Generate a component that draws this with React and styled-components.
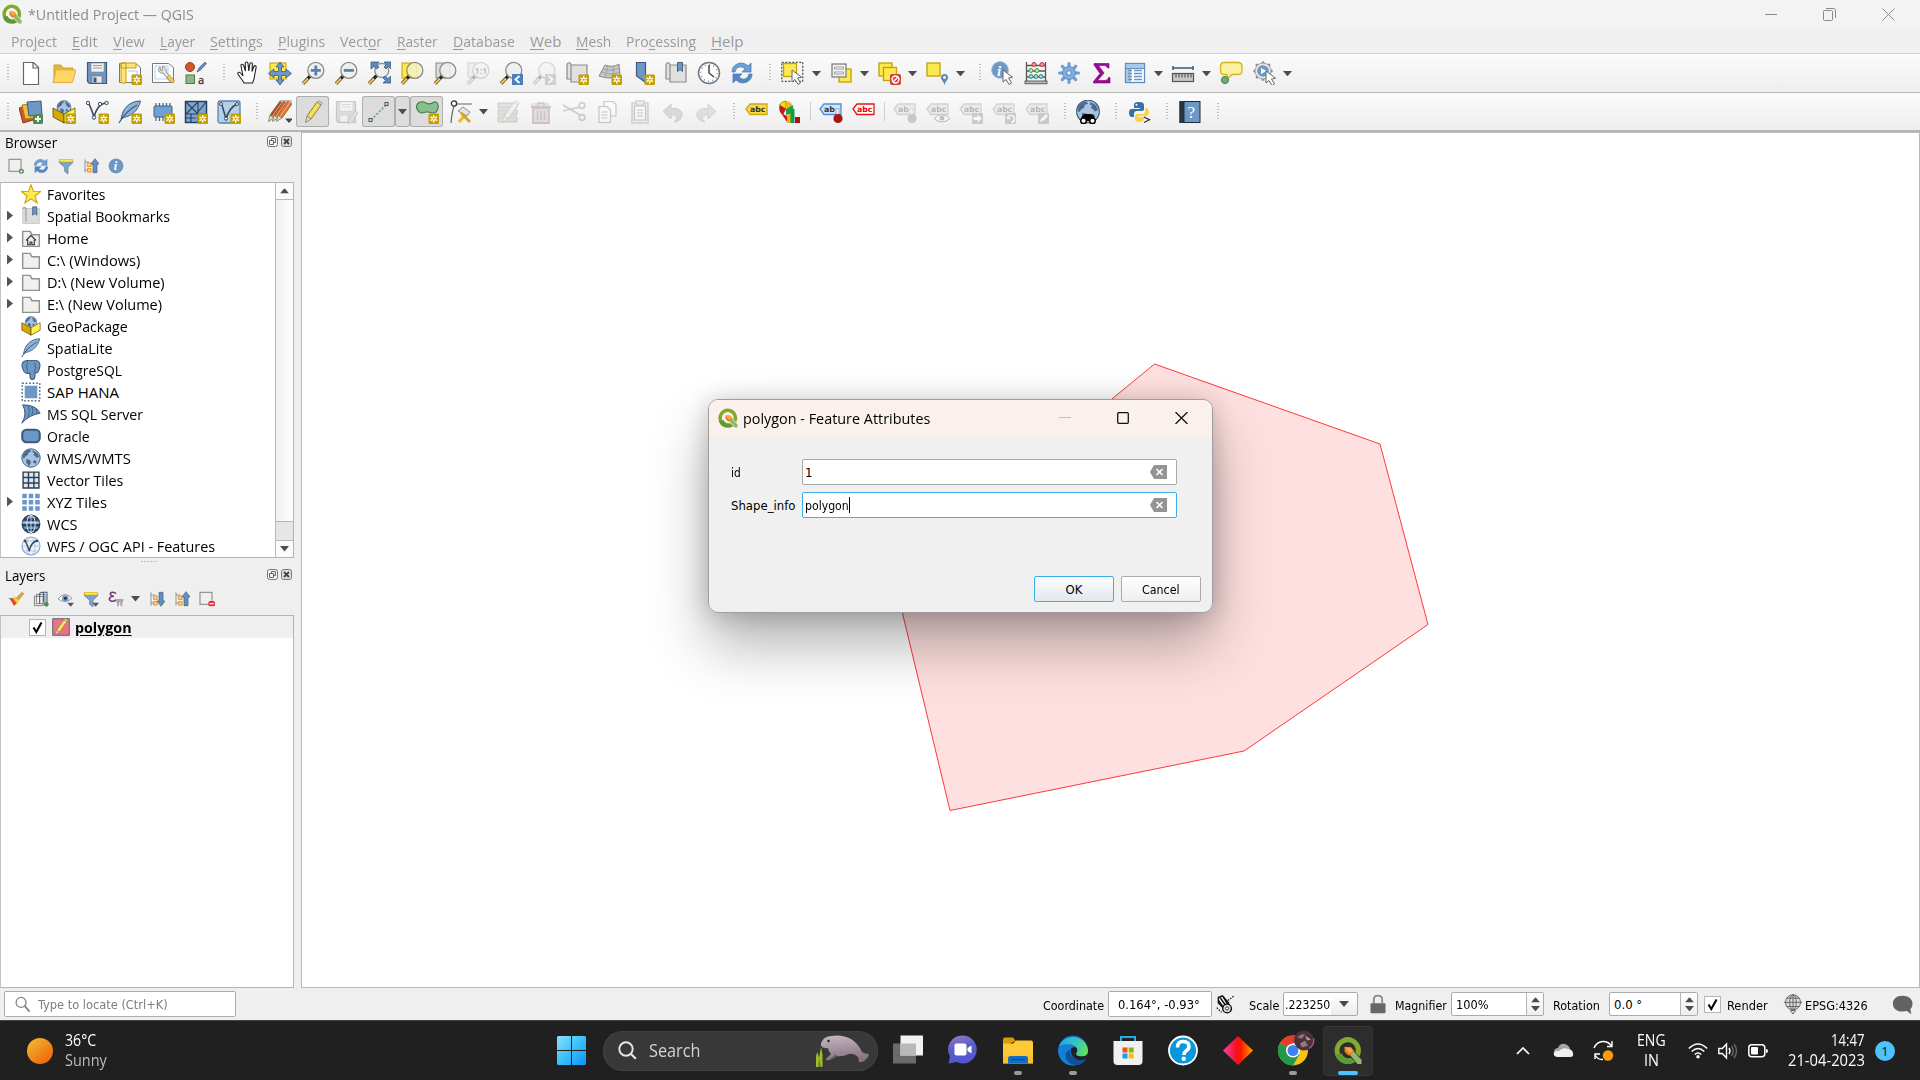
import React, { useLayoutEffect, useRef, useState } from "react";
import styled, { createGlobalStyle, css } from "styled-components";

const UI = `"Open Sans", "Noto Sans", sans-serif`;
const DLG = `"DejaVu Sans Condensed", "DejaVu Sans", sans-serif`;

const Global = createGlobalStyle`
  html, body { margin: 0; padding: 0; overflow: hidden; background: #efefef; }
  * { box-sizing: border-box; }
  svg { display: block; flex: none; }
`;

/* ---------- text fitted to a column width ---------- */
const FitBox = styled.span`
  display: block;
  flex: none;
  width: ${(p) => p.$w}px;
  margin-left: ${(p) => p.$ml || 0}px;
  white-space: nowrap;
  overflow: visible;
`;
const FitInner = styled.span`
  display: inline-block;
  transform-origin: 0 50%;
`;
function Fit({ w, ml, children }) {
  const ref = useRef(null);
  const [scale, setScale] = useState(1);
  useLayoutEffect(() => {
    const natural = ref.current.offsetWidth;
    if (natural) setScale(w / natural);
  }, [w]);
  return (
    <FitBox $w={w} $ml={ml}>
      <FitInner ref={ref} style={{ transform: `scaleX(${scale})` }}>{children}</FitInner>
    </FitBox>
  );
}

/* ---------- icon fragments ---------- */
const Y = "#fce94f";
const YD = "#c4a000";
const B = "#6d97c4";
const BD = "#3c5a7c";

const Star = () => (
  <g>
    <rect x="13.5" y="13.5" width="10.5" height="10.5" rx="1.2" fill="#c4a000" />
    <path d="M18.7 15v7.5M15.5 16.9l6.5 3.7M22 16.9l-6.5 3.7" stroke="#fff" strokeWidth="1.5" />
    <circle cx="18.7" cy="18.7" r="1" fill="#c4a000" />
  </g>
);
const Mag = ({ fill = "#eeeeec", r = 8 }) => (
  <g>
    <path d="M9.6 14.6 2 22.6" stroke="#222" strokeWidth="3.4" />
    <path d="M7 17.4 1.8 22.8" stroke="#f5c842" strokeWidth="2.2" />
    <circle cx="14.8" cy="9.4" r={r} fill={fill} fillOpacity=".88" stroke="#8a8c88" strokeWidth="1.3" />
  </g>
);
const Globe = ({ cx = 12, cy = 12, r = 9 }) => (
  <g transform={`translate(${cx - r} ${cy - r}) scale(${r / 10})`}>
    <circle cx="10" cy="10" r="9.6" fill="#a9c4e2" stroke={BD} strokeWidth="1" />
    <path d="M2 6Q5 1 9 1.500l1 2-3 1 0 2-3 2-1 2-2-1zM5 11l4 1 1 3-2 3.600L5 15zM12 2l5 3 1.500 4-3 1-1-2-2-1 1-2-2-1zM13 12l3 1-1 3-3-1z" fill={BD} fillOpacity=".85" />
  </g>
);
const Tag = ({ fill = Y, stroke = YD, color = "#333", t = "abc" }) => (
  <g>
    <path d="M1 9 5 4h17v10.500H5z" fill={fill} stroke={stroke} strokeWidth="1.3" />
    <text x="5" y="12" fontFamily="DejaVu Sans" fontWeight="bold" fontSize="7.800" letterSpacing="-.1" fill={color}>{t}</text>
  </g>
);
const Cursor = ({ x = 12, y = 9 }) => (
  <path transform={`translate(${x} ${y})`} d="M0 0v12l3-2.500 3 5 2.500-1.500-3-5 4-.8z" fill="#fff" stroke="#666" strokeWidth="1" />
);
const Refresh = () => (
  <g>
    <path d="M2 11C2 3 12-1 18 5l3-3v9h-9l3-3C11 4 6 6 5 11z" fill="#6d9fd8" stroke="#4c7fb5" strokeWidth=".8" />
    <path d="M22 13c0 8-10 12-16 6l-3 3v-9h9l-3 3c4 4 9 2 10-3z" fill="#5686c2" stroke="#4c7fb5" strokeWidth=".8" />
  </g>
);
const Pencil = ({ c = "#f1d94b", x = 0 }) => (
  <g transform={`translate(${x} 0)`}>
    <path d="M16 2 20 5 10 19 6 16z" fill={c} stroke="#8d7b1c" strokeWidth=".9" />
    <path d="M17.800 3.500 8 17.500" stroke="#fff" strokeOpacity=".5" strokeWidth="1" />
    <path d="M6 16 4.500 22.500 10 19z" fill="#ead8b8" stroke="#7a7a6a" strokeWidth=".8" />
    <path d="M16 2 18 0.600 21.600 3.200 20 5z" fill="#ccc" stroke="#888" strokeWidth=".6" />
  </g>
);
const Box = () => (
  <g>
    <Globe cx={12} cy={7.500} r={7.200} />
    <path d="M1 8 12 14v9L1 17z" fill="#d4aa00" stroke="#5c4a00" strokeWidth=".8" />
    <path d="M23 8 12 14v9l11-6z" fill="#fff155" stroke="#5c4a00" strokeWidth=".8" />
  </g>
);
const Feather = () => (
  <g>
    <path d="M22.500 1C13 1 6 7 4 15l-1 4 4-2C13 16 20 11 22.500 1z" fill="#8db2da" stroke={BD} strokeWidth="1" />
    <path d="M19 5C12 9 6 14 1 23" stroke={BD} fill="none" strokeWidth="1.200" />
  </g>
);
const Map_ = () => (
  <path d="M2 4c0-3 4-3 4 0h16v17H6v-3H2zM6 4v14" fill="#e0e0de" stroke="#8b8d89" strokeWidth="1.200" />
);
const QLogo = () => (
  <g>
    <path d="M12 0.500a11.500 11.500 0 1 0 6 21.300l-3.600-3.500a7 7 0 1 1 4-4.500l3.400 3.400A11.500 11.500 0 0 0 12 .5z" fill="#81a92c" />
    <path d="M12 23.500a11.500 11.500 0 0 1-11-8l5.600-1a7 7 0 0 0 7.800 3.800l3.600 3.500a11 11 0 0 1-6 1.700z" fill="#5f9a33" />
    <path d="m12.500 14.500 3-3.200 8 8.500v3.700h-3.400z" fill="#94b86a" />
    <path d="M9 9h5.500l3 3.500-5 4L9 13z" fill="#ee7913" />
    <path d="m9 9 6 1 1 2.500-3 2z" fill="#f7a64b" />
  </g>
);
const Tree = ({ down }) => (
  <g>
    <path d="M3 2v20M3 6h6M3 18h6" stroke="#888" strokeWidth="1.300" fill="none" />
    <rect x="7" y="7.500" width="5" height="5" fill="#fcd9a0" stroke="#f08c1c" strokeWidth="1.500" />
    <rect x="7" y="16" width="5" height="5" fill="#fcd9a0" stroke="#f08c1c" strokeWidth="1.500" />
    <path d={down ? "M18 23l-6-8h3V2h6v13h3z" : "M18 1l-6 8h3v13h6V9h3z"} fill="#6390c0" stroke={BD} strokeWidth="1" />
  </g>
);
const Funnel = () => (
  <g>
    <path d="M2 4h20v3L15 14v10l-5-4v-6L2 7z" fill="#7fa3cb" stroke="#55779c" strokeWidth="1" />
    <rect x="2" y="2" width="20" height="4" fill={Y} stroke={YD} strokeWidth=".7" />
  </g>
);
const FolderShape = () => (
  <path d="M2 4h9l2 4h9v14H2z" fill="#f0f0ef" stroke="#8f918d" strokeWidth="1.700" />
);
const DownTick = () => <path d="M14 17.500h10l-5 6z" fill="#555" />;

const ICONS = {
  logo: <QLogo />,
  newdoc: <path d="M4.500 1.500h10l5 5v17h-15zM14 1.500V7h5.500" fill="#fff" stroke="#666" strokeWidth="1.200" />,
  open: (<g><path d="M2 21V4h7l2 3h10v4" fill="#e3b53c" stroke="#d1a12a" /><path d="M1 21.500 4 9h20l-3.500 12.500z" fill="#fdd663" stroke="#e0b040" /></g>),
  save: (<g><path d="M2.500 1.500h19v21h-17l-2-2z" fill={B} stroke={BD} strokeWidth="1.200" /><rect x="6" y="2" width="13" height="9" fill="#f2f2f0" stroke="#888" strokeWidth=".6" /><path d="M8 4.500h9M8 7h9" stroke="#999" /><rect x="7" y="15" width="10" height="7" fill="#e8e8e8" stroke="#667" strokeWidth=".6" /><rect x="8.500" y="16.500" width="3" height="5" fill={BD} /></g>),
  savegrey: (<g><path d="M2.500 1.500h19v21h-17l-2-2z" fill="#aaa" stroke="#666" strokeWidth="1.200" /><rect x="6" y="2" width="13" height="9" fill="#f2f2f0" stroke="#888" strokeWidth=".6" /><path d="M8 4.500h9M8 7h9" stroke="#999" /><rect x="6" y="15" width="8" height="7" fill="#eee" stroke="#667" strokeWidth=".6" /><path d="M21 11l3 2-6 9-4 2 1-4z" fill="#cba" stroke="#765" strokeWidth=".8" /></g>),
  layout: (<g><path d="M1.500 2.500h16l5 4v15h-21z" fill="#fff" stroke="#777" /><path d="M3 2h5v20H3zM3 2h15v5H3z" fill="#fbe27a" stroke={YD} /><path d="M10 10h9v9" fill="none" stroke="#aac8f0" /><Star /></g>),
  manager: (<g><path d="M1.500 2.500h16l5 4v15h-21z" fill="#fff" stroke="#777" /><path d="M4 5h13v13H4z" fill="none" stroke="#b5cdf0" /><path d="M9 6c-3 2-1 7 3 6l8 10 3-2-8-9c1-4-2-6-4-5l1 3-2 1z" fill="#e6e6e6" stroke="#777" strokeWidth=".8" /><path d="m16 16 5 6 2.500-2-5-6z" fill="#f2cf51" stroke="#a8860d" strokeWidth=".6" /></g>),
  style: (<g><circle cx="6" cy="6" r="4.500" fill="#d2572b" stroke="#9c3a16" /><path d="m13 11 2-4 6-6 1.500 1.500-6 6.500z" fill="#5f8fc4" stroke={BD} strokeWidth=".7" /><rect x="2" y="14" width="8.500" height="8.500" fill="#8cb68c" stroke="#4c7a4c" /><text x="14" y="22.500" fontFamily="Open Sans" fontSize="11" fill="#333" stroke="#333" strokeWidth=".3">a</text></g>),
  hand: <path transform="translate(1 0)" d="M8 22c-1-3-4-5-6-9-.6-2 1.500-2.500 3-.5L7 15 5 5c-.3-2 2-2.400 2.600-.5L9.500 10 9.200 2.500c0-2 2.600-2 2.800 0L12.800 10l1-7c.3-1.800 2.700-1.500 2.600.4L16 10.500l1.900-5c.7-1.500 2.600-.8 2.200 1L18.500 15c0 3-1 5-2 7z" fill="#fff" stroke="#222" strokeWidth="1.100" />,
  pan: (<g><rect x="2" y="2" width="16" height="16" fill={Y} stroke={YD} /><path d="m12 1 4 5h-2.500v4.500H18V8l5.500 4.500L18 17v-2.500h-4.500V19H16l-4 5-4-5h2.500v-4.500H6V17L.5 12.500 6 8v2.500h4.500V6H8z" fill={B} stroke={BD} strokeWidth=".8" /></g>),
  zoomin: (<g><Mag /><path d="M14.800 4.500v10M9.800 9.400h10" stroke="#5180b5" strokeWidth="2.800" /></g>),
  zoomout: (<g><Mag /><path d="M9.800 9.400h10" stroke="#5180b5" strokeWidth="2.800" /></g>),
  zoomfull: (<g><Mag r={7} /><path d="M4 1h8L9.500 3.500 12 6 9.500 8 7 5.500 4 8zM24 1h-7l2.500 2.500L17 6l2 2 2.500-2.500L24 8zM24 22h-8l2.500-2.500L16 17l2-2 3 2.500 3-2.500z" fill="#5a8ac0" stroke={BD} strokeWidth=".8" /></g>),
  zoomsel: (<g><rect x="2" y="2" width="15" height="15" fill={Y} stroke={YD} /><Mag fill="#f5f0c0" /></g>),
  zoomlayer: (<g><rect x="3" y="2" width="14" height="15" fill="#ddd" stroke="#888" /><Mag /></g>),
  zoom11: (<g><rect x="2" y="2" width="14" height="14" fill="#ddd" stroke="#888" /><Mag /><text x="8.500" y="13" fontFamily="Open Sans" fontWeight="bold" fontSize="9" fill="#555">1:1</text></g>),
  zoomlast: (<g><Mag /><rect x="13" y="13" width="11" height="11" fill="#4e80b8" /><path d="m20.500 15-4 3.500 4 3.500" fill="none" stroke="#fff" strokeWidth="1.800" /></g>),
  zoomnext: (<g><Mag /><rect x="13" y="13" width="11" height="11" fill="#888" /><path d="m16.500 15 4 3.500-4 3.500" fill="none" stroke="#fff" strokeWidth="1.800" /></g>),
  newmap: (<g><Map_ /><Star /></g>),
  mesh: (<g><path d="M1 15Q5 8 7 4q8 3 14-1l1 12q-10 4-21 0z" fill="#c6c8c4" stroke="#888" /><path d="M3.500 11q10 4 18.500 0M5 8q8 3 17-1M10 5 7 16M15 5l1 12" fill="none" stroke="#999" strokeWidth=".8" /><Star /></g>),
  bookmark: (<g><path d="M5.500 1.500h9v20L10 18l-4.500-3z" fill={B} stroke={BD} strokeWidth="1.200" /><Star /></g>),
  bookmarks: (<g><Map_ /><path d="M13.500 1.500h5v9L16 8.500l-2.500 2z" fill={B} stroke={BD} strokeWidth=".9" /></g>),
  clock: (<g><circle cx="12" cy="12" r="10.500" fill="#fff" stroke="#777" strokeWidth="1.500" /><circle cx="12" cy="12" r="8.400" fill="none" stroke={B} strokeWidth="1.600" strokeDasharray="1 3.400" /><path d="M12 4v8l5 4" fill="none" stroke="#444" strokeWidth="1.500" /></g>),
  refresh: <Refresh />,
  select: (<g><rect x=".8" y="1.300" width="21" height="19" fill="none" stroke="#222" strokeDasharray="2 1.500" /><rect x="2.500" y="2.500" width="13" height="13" fill={Y} stroke={YD} strokeWidth="1.300" /><Cursor x={11} y={9} /></g>),
  selform: (<g><rect x="10" y="8" width="12" height="13" fill={Y} stroke={YD} strokeWidth="1.300" /><rect x="3" y="3" width="14" height="13" fill="#f2f2f2" stroke="#777" strokeWidth="1.200" /><path d="M5.500 6h9v2h-9zM5.500 11h9v2h-9z" fill="#fff" stroke="#888" strokeWidth=".8" /></g>),
  deselect: (<g><rect x="2" y="2" width="13" height="13" fill={Y} stroke={YD} strokeWidth="1.300" /><rect x="6.500" y="6.500" width="13" height="13" fill={Y} stroke={YD} strokeWidth="1.300" /><rect x="13" y="13" width="11" height="11" rx="2" fill="#dc3b35" /><circle cx="18.500" cy="18.500" r="3.400" fill="none" stroke="#fff" strokeWidth="1.500" /><path d="m16 21 5-5" stroke="#fff" strokeWidth="1.500" /></g>),
  selloc: (<g><rect x="2" y="2" width="13" height="13" fill={Y} stroke={YD} strokeWidth="1.300" /><path d="M19.500 24c-1-4-3.500-5-3.500-7.500a3.500 3.500 0 0 1 7 0c0 2.500-2.500 3.500-3.500 7.500z" fill="#5e86a8" /><circle cx="19.500" cy="16.500" r="1.400" fill="#fff" /></g>),
  info: (<g><circle cx="9" cy="9" r="8.300" fill={B} stroke="#9bb6d6" /><text x="6" y="14.500" fontFamily="Liberation Serif" fontStyle="italic" fontWeight="bold" fontSize="15" fill="#fff">i</text><Cursor x={12} y={9} /></g>),
  infosmall: (<g><circle cx="12" cy="12" r="10.500" fill={B} stroke="#587fb0" /><text x="8.500" y="18.500" fontFamily="Liberation Serif" fontStyle="italic" fontWeight="bold" fontSize="19" fill="#fff">i</text></g>),
  abacus: (<g><path d="M2.500 1v20M21.500 1v20M2 4.500h20M2 10h20M2 16h20" stroke="#555" strokeWidth="1.300" fill="none" /><rect x="1" y="20" width="22" height="2.800" fill="#bbb" stroke="#444" strokeWidth=".8" /><g fill="#f49a9a" stroke="#c22"><circle cx="10" cy="3.500" r="2" /><circle cx="18" cy="3.500" r="2" /></g><g fill="#b6e6b0" stroke="#3a9d3a"><circle cx="7" cy="9.500" r="2" /><circle cx="13" cy="9.500" r="2" /></g><g fill="#a8cbe8" stroke="#387"><circle cx="7" cy="15.500" r="2" /><circle cx="12" cy="15.500" r="2" /><circle cx="17" cy="15.500" r="2" /></g></g>),
  gear: (<g><g stroke="#6f9fd4" strokeWidth="3.200" strokeLinecap="round"><path d="M12 2.500v19M2.500 12h19M5.300 5.300l13.400 13.400M18.700 5.300 5.300 18.700" /></g><circle cx="12" cy="12" r="6.500" fill="#82aede" stroke="#4f82bd" strokeWidth=".8" /><circle cx="12" cy="12" r="2.300" fill="#f5f5f5" stroke="#4f82bd" /></g>),
  sigma: <path d="M4 2.500h15V7h-1.500Q17 4.500 14 4.500H8.500L14 12l-6.500 7.500H15q3 0 3.500-3H20V22H3.500v-1.500L10 12.500 4 4z" fill="#9b0a9b" stroke="#750075" strokeWidth=".6" />,
  table: (<g><rect x="2.500" y="2.500" width="19" height="19" fill="#fff" stroke="#5c8fbf" strokeWidth="1.300" /><path d="M3 3h18v4H3zM3 3h5v18H3z" fill="#a9c9e6" /><path d="M5 9.500h4M11 9.500h8M5 12.500h4M11 12.500h8M5 15.500h4M11 15.500h8M5 18.500h4M11 18.500h8" stroke="#6793bd" strokeWidth="1.300" /><path d="M2.500 7.500h19" stroke="#5c8fbf" /></g>),
  measure: (<g><path d="M2 7h20M2 5v4M22 5v4" stroke={BD} strokeWidth="1.500" fill="none" /><rect x="1.500" y="12.500" width="21" height="8" fill="#c8c8c6" stroke="#555" strokeWidth="1.200" /><path d="M5 13v3.500M8 13v3.500M11 13v3.500M14 13v3.500M17 13v3.500M20 13v3.500" stroke="#444" /></g>),
  maptip: (<g><path d="M5 1.500h14q4 0 4 4v4q0 4-4 4h-6L8 18v-4.500H5q-3.500 0-3.500-4v-4q0-4 3.500-4z" fill="#fdf1a0" stroke="#d0b51c" strokeWidth="1.300" /><circle cx="6" cy="19" r="3.600" fill="#72a878" stroke="#4a7d50" /></g>),
  action: (<g><g stroke="#888" strokeWidth="3.200" strokeLinecap="round"><path d="M11 1.800v16.400M2.800 10h16.400M5.200 4.200l11.600 11.600M16.800 4.200 5.200 15.800" /></g><circle cx="11" cy="10" r="8" fill="#e6e6e4" stroke="#999" strokeWidth=".8" /><circle cx="11" cy="10" r="5.800" fill={B} /><path d="m9 7 5.500 3L9 13z" fill="#fff" /><Cursor x={14} y={10} /></g>),
  addlayer: (<g><path d="m0 8 8-2 6 14-10 3z" fill="#d9512c" stroke="#93320f" /><path d="m3 5 10-1 3 14-10 1z" fill="#eebf3c" stroke="#a27a10" /><path d="m8 2 14-1 1 14-13 1z" fill={B} stroke={BD} /><rect x="14" y="14" width="10" height="10" rx="1.500" fill="#4f8a56" /><path d="M19 16v6M16 19h6" stroke="#fff" strokeWidth="1.800" /></g>),
  geopkg: (<g><Box /><Star /></g>),
  geopkgs: <Box />,
  shape: (<g><path d="M4 4Q7 10 9 17Q12 5 20 3" fill="none" stroke="#33475c" strokeWidth="1.600" /><g fill="#fff" stroke="#33475c" strokeWidth="1"><circle cx="3" cy="3" r="1.700" /><circle cx="9" cy="17.500" r="1.700" /><circle cx="15" cy="4" r="1.700" /><circle cx="21.500" cy="3" r="1.700" /></g><Star /></g>),
  spatial: (<g><Feather /><Star /></g>),
  feather: <Feather />,
  memory: (<g><path d="M5 3v18M8.500 3v18M12 3v18M15.500 3v18M19 3v18" stroke="#44607f" strokeWidth="1.200" /><rect x="3" y="6" width="18" height="11" rx="1" fill="#6fa0d6" stroke="#44607f" /><Star /></g>),
  meshlayer: (<g><rect x="1.500" y="1.500" width="21" height="21" fill="#7fa5cf" stroke="#24405e" strokeWidth="1.500" /><path d="m2 2 12 12M14 2 2 14M14 2v20M2 14h20M22 2 14 12M2 18h10M7 14v8" stroke="#24405e" fill="none" strokeWidth="1.100" /><Star /></g>),
  gpx: (<g><rect x="1" y="1" width="22" height="22" rx="2" fill="#b5cfe8" stroke="#5a83ad" strokeWidth="1.300" /><path d="M5 5 9 19Q12 8 20 4" fill="none" stroke="#33475c" strokeWidth="1.500" /><g fill="#fff" stroke="#33475c"><circle cx="4" cy="4" r="1.500" /><circle cx="9" cy="18.500" r="1.500" /><circle cx="20" cy="4" r="1.500" /></g><Star /></g>),
  edits: (<g><g transform="translate(1 -1)"><Pencil c="#b5423a" x={-5} /><Pencil c="#d85a30" x={-1} /><Pencil c="#e87131" x={3} /></g><path d="M17 18.500h8l-4 4.500z" fill="#444" /></g>),
  pencil: <Pencil />,
  digitize: (<g><path d="m4 20 15-15" stroke="#72b377" strokeWidth="1.800" strokeDasharray="2.200 1.600" /><rect x="2" y="18.500" width="3" height="3" fill="#ddd" stroke="#555" /><rect x="18" y="2.500" width="3" height="3" fill="#ddd" stroke="#555" /></g>),
  addpoly: (<g><path d="M2 9C0 3 6 0 11 3q4 2 8-1c4-1 6 6 2 10-4 3-6-1-10 0S4 14 2 9z" fill="#87c08b" stroke="#4b7f52" strokeWidth="1.200" /><Star /></g>),
  vertex: (<g transform="translate(1 0)"><path d="M2 23Q3 10 6 4h17" fill="none" stroke="#666" strokeWidth="1.200" /><circle cx="5" cy="3.500" r="2.600" fill="#fff" stroke="#333" strokeWidth="1.300" /><path d="m10 22 8-9" stroke="#edb92e" strokeWidth="3.200" /><path d="m9 11 5-4 7 5-3 4z" fill="#e3e3e3" stroke="#777" strokeWidth=".8" /><path d="m12 13 9 9" stroke="#d9a520" strokeWidth="2.800" /></g>),
  multi: (<g><path d="M2 3h19v5H2zM2 10h19v5H2zM2 17h19v5H2z" fill="#b9b493" stroke="#77735a" /><Pencil c="#ddd" x={2} /></g>),
  del: (<g><path d="M2 3h18v5H2z" fill="#bba" /><path d="M4 8h16v15H4zM2 7h20" fill="#d9a5a5" stroke="#a55" strokeWidth="1.800" /><path d="M8.500 11v9M12 11v9M15.500 11v9M9 6V3h6v3" stroke="#a55" strokeWidth="1.500" fill="none" /></g>),
  cut: (<g fill="none" stroke="#777" strokeWidth="1.700"><path d="M1 5 18 15M1 11l17-4" /><circle cx="20" cy="5.500" r="2.800" /><circle cx="20" cy="17.500" r="2.800" /></g>),
  copy: (<g fill="#fff" stroke="#666" strokeWidth="1.200"><path d="M9 1.500h9l3 3V16H9z" /><path d="M4 6.500h8l3.500 3.500v12.500H4zM6.500 12h6M6.500 15h6M6.500 18h6" /></g>),
  paste: (<g fill="#ddd" stroke="#666" strokeWidth="1.200"><path d="M4 3h16v20H4z" /><path d="M6.500 6h11v14h-11z" fill="#fff" /><path d="M8 1h8v4H8zM9 10h6M9 13h6M9 16h6" /></g>),
  undo: <path d="M10 4v4.500c8-1 12 3 11 7.500-1 3.500-4 5.500-8 6 3-2 5-7-3-7.500V19L2 11.500z" fill="#b79a96" stroke="#94706c" />,
  redo: <path d="M14 4v4.500c-8-1-12 3-11 7.500 1 3.500 4 5.500 8 6-3-2-5-7 3-7.500V19l8-7.500z" fill="#a8b5a8" stroke="#7c917c" />,
  tag: <Tag fill="#f6dd47" stroke="#cba90d" />,
  diagram: (<g><path d="M8 9V1A8 8 0 0 0 1.500 5z" fill="#f5e300" stroke="#333" strokeWidth=".5" /><path d="M8 9 1.500 5Q0 12 5 15z" fill="#c81818" /><path d="M8 9 14.500 5C17 10 13 15 8 15z" fill="#10a050" /><path d="M8 9V1q4.500.5 6.500 4z" fill="#f3b51c" /><path d="m3 13 6 3v6z" fill="#c81818" /><rect x="9" y="14" width="4" height="9" fill="#f0b70a" /><rect x="12.500" y="9" width="4" height="14" fill="#0a9c50" /><rect x="17" y="17" width="5" height="6" fill="#b50e0e" /></g>),
  tagpin: (<g><Tag fill="#cfe3fa" stroke="#4a90e2" t="ab" /><path d="M17 8.500h3v7h-3z" fill="#eee" stroke="#888" strokeWidth=".6" /><circle cx="19" cy="18.500" r="4.600" fill="#a81616" /></g>),
  tagred: <Tag fill="#fff" stroke="#ee1111" color="#e00" />,
  tagpin2: (<g><Tag fill="#d8d4c0" stroke="#8c8a80" t="ab" /><path d="M17 8.500h3v7h-3z" fill="#eee" stroke="#888" strokeWidth=".6" /><circle cx="19" cy="18.500" r="4.600" fill="#865" /></g>),
  tageye: (<g><Tag fill="#d8d4c0" stroke="#8c8a80" /><path d="M8 18.500q8-8 16 0-8 7-16 0z" fill="#fff" stroke="#444" /><circle cx="16" cy="18" r="2.500" fill="#555" /></g>),
  tagmove: (<g><Tag fill="#d8d4c0" stroke="#8c8a80" /><rect x="13" y="13" width="11" height="11" rx="1" fill="#777" /><path d="M14.500 17h4v-2.500l4.500 4-4.500 4V20h-4z" fill="#fff" /></g>),
  tagrot: (<g><Tag fill="#d8d4c0" stroke="#8c8a80" /><rect x="13" y="13" width="11" height="11" rx="1" fill="#777" /><path d="M19 22.500a3.500 3.500 0 1 0-3.500-4h3" fill="none" stroke="#fff" strokeWidth="1.700" /></g>),
  tagedit: (<g><Tag fill="#d8d4c0" stroke="#8c8a80" /><rect x="13" y="13" width="11" height="11" rx="1" fill="#77755f" /><path d="m15 22 1-3 5-5 2 2-5 5z" fill="#fff" /></g>),
  metasearch: (<g><Globe cx={12} cy={11.500} r={11.800} /><path d="M5 19q1-5 5-5h4q4 0 5 5l-5 2h-4z" fill="#000" /><circle cx="7.500" cy="20.800" r="2.800" fill="#fff" stroke="#000" strokeWidth="1.500" /><circle cx="16.500" cy="20.800" r="2.800" fill="#fff" stroke="#000" strokeWidth="1.500" /></g>),
  python: (<g><path d="M12 2c-4 0-5 1-5 3v3h6v1H4.500C2.500 9 2 11 2 13s1 4 3 4h2v-3c0-2 1-3 3-3h5c1.500 0 2-1 2-2V5c0-2-1.500-3-5-3z" fill="#3572a5" /><path d="M12 22c4 0 5-1 5-3v-2h-6v-1h8.500c1.500 0 2.500-2 2.500-4s-1-4-3-4h-1v3c0 2-1 3-3 3h-5c-1.500 0-2 1-2 2v3c0 2 1 3 4 3z" fill="#fdd23e" /><circle cx="9.500" cy="4.700" r="1" fill="#fff" /><path d="m17 17 5.500 2.800-5.500 2.700" fill="none" stroke="#333" strokeWidth="1.300" /></g>),
  help: (<g><rect x="2" y="1.500" width="20" height="21" fill={B} stroke="#1d2a38" /><rect x="1.500" y="1" width="5" height="22" fill="#26343f" /><text x="9.500" y="18" fontFamily="Liberation Serif" fontSize="17" fill="#fff">?</text></g>),
  newlayer: (<g><rect x="1.500" y="2" width="18" height="18" fill="none" stroke="#888" strokeWidth="1.600" /><circle cx="20" cy="20" r="3.800" fill="#4f8a56" /><path d="M20 18v4M18 20h4" stroke="#fff" strokeWidth="1.300" /></g>),
  removelayer: (<g><rect x="1.500" y="2" width="18" height="18" fill="none" stroke="#888" strokeWidth="1.600" /><rect x="14" y="15" width="10" height="8" rx="2.500" fill="#e0383e" /><path d="M16 19h6" stroke="#fff" strokeWidth="1.800" /></g>),
  filter: <Funnel />,
  filterdd: (<g><Funnel /><DownTick /></g>),
  collapse: <Tree />,
  expand: <Tree down />,
  star: <path d="m12 1 3 7.800 8.500.3-6.700 5.300 2.500 8.300-7.300-4.900-7.300 4.900 2.500-8.300L.5 9.100 9 8.800z" fill="#fdea4c" stroke="#c9a20c" strokeWidth="1.300" />,
  spbook: (<g><path d="M2 3h20v18H2z" fill="#dcdcda" stroke="#c4c6c2" strokeWidth="1" /><path d="M2 3q2-2 4 0v16" fill="none" stroke="#999" strokeWidth="1.300" /><path d="M14 1h5v10l-2.500-2-2.500 2z" fill={B} stroke={BD} strokeWidth=".9" /></g>),
  home: (<g><FolderShape /><path d="m6 15 6-6 6 6M8 14v6h3v-3h2v3h3v-6" fill="none" stroke="#444" strokeWidth="1.500" /></g>),
  folder: <FolderShape />,
  postgres: (<g><path d="M3 2q4-2 8-1 6-2 10 1 4 4-1 13l-3 .500q0 5-1 7-3 2-5-1l-.5-6Q4 18 2 10 0 5 3 2z" fill={B} stroke={BD} strokeWidth="1.300" /><path d="M8 2q-3 6 0 12M16 3q3 5 0 12" fill="none" stroke={BD} /></g>),
  hana: (<g><rect x="4.500" y="4.500" width="15" height="15" fill={B} /><rect x="1.500" y="1.500" width="21" height="21" fill="none" stroke={BD} strokeWidth="1.800" strokeDasharray="1.800 2.400" /></g>),
  mssql: (<g><path d="M2 1Q18 1 23 11 10 13 1 23 8 12 2 1z" fill={B} stroke={BD} strokeWidth="1.200" /><path d="M8 2q4 6 0 14M13 3q3 5 0 10M18 5q2 4 0 7" fill="none" stroke={BD} /></g>),
  oracle: <rect x="1.500" y="4.500" width="21" height="15" rx="5" fill={B} stroke={BD} strokeWidth="2.500" />,
  globe: <Globe r={11.5} />,
  vtiles: (<g><rect x="2.500" y="2.500" width="19" height="19" fill="#dce8f5" /><path d="M2.500 2.500h19v19h-19zM9 2v20M15.500 2v20M2 9h20M2 15.500h20" fill="none" stroke="#2f3e4e" strokeWidth="1.700" /></g>),
  xyz: (<path d="M1.500 2h5.500v5.500H1.500zM9.200 2h5.500v5.500H9.200zM17 2h5.500v5.500H17zM1.500 9.500h5.500v5.500H1.500zM9.200 9.500h5.500v5.500H9.200zM17 9.500h5.500v5.500H17zM1.500 17h5.500v5.500H1.500zM9.200 17h5.500v5.500H9.200zM17 17h5.500v5.500H17z" fill={B} />),
  wcs: (<g><circle cx="12" cy="12" r="10.500" fill={B} stroke="#27405c" strokeWidth="1.600" /><path d="M4 5h16v3.500H4zM1.500 12h21v3H1.500zM5 18h14v2.500H5z" fill="#27405c" /><ellipse cx="12" cy="12" rx="5" ry="10.500" fill="none" stroke="#dbe8f5" strokeWidth="1.200" /><path d="M12 1.500v21M1.500 10.500h21" stroke="#dbe8f5" /></g>),
  wfs: (<g><circle cx="12" cy="12" r="10.800" fill="#eef4fa" stroke="#7ea3cb" strokeWidth="1.300" /><ellipse cx="12" cy="12" rx="5" ry="10.500" fill="none" stroke="#a5c0df" /><path d="M1.500 12h21M3 6h18M3 18h18" stroke="#a5c0df" /><path d="M5 6q3 5 5 12Q12 8 18 6" fill="none" stroke="#33475c" strokeWidth="1.700" /><circle cx="19" cy="6" r="1.600" fill="#33475c" /><circle cx="5" cy="6" r="1.600" fill="#33475c" /></g>),
  brush: (<g><path d="m12 11 9-9 2.500 2-8 10z" fill="#e8a23a" stroke="#a86d12" strokeWidth=".7" /><path d="M2 10q5 2 8-2l7 7q-2 5-7 6z" fill="#f3cf3d" /><path d="M2 10q3 1.500 5 .5l6 8-4 4z" fill="#dd4b2e" /><path d="m1 10 3 .8 4 7z" fill="#4f7fc0" /></g>),
  group: (<g fill="none" stroke="#777" strokeWidth="1.300"><rect x="2" y="8" width="13" height="14" /><rect x="5" y="5" width="13" height="14" /><path d="M21 19V2h-7M10 19V5q0-3 3-3t3 3v12" stroke={BD} strokeWidth="1.600" /><circle cx="20" cy="20" r="3.500" fill="#4f8a56" stroke="none" /></g>),
  eye: (<g><path d="M0 12Q10-1 21 11 11 20 0 12z" fill="#f7f7f7" stroke="#7d8b99" strokeWidth="1.300" /><circle cx="11" cy="11" r="4.800" fill={B} /><circle cx="11" cy="11" r="2" fill="#223" /><DownTick /></g>),
  eps: (<g><path d="M12 4Q9 1 5 2.200 2 4 5 7q1 .8 4 .8-4 0-6 2-2.500 4 2 5.500 4 .8 7-2" fill="none" stroke="#6b3f70" strokeWidth="2.400" /><path d="M12 12h11v3l-1.500 3v5h-3v-5l-1-1-1 1v5h-3v-5L12 15z" fill="#aaa" /></g>),
  laypoly: (<g><rect x="1" y="1" width="22" height="22" fill="#e8718d" stroke="#444" strokeWidth="1" /><Pencil /></g>),
  gps: (<g><path d="m3 3 5-2 8 9-6 7-7-7z" fill="#fff" stroke="#111" strokeWidth="1.800" /><path d="m5 3 7 10M9 2l6 10M3 7l6 8" stroke="#111" strokeWidth="2" /><circle cx="14" cy="17" r="5.500" fill="#ddd" stroke="#111" strokeWidth="1.800" /><circle cx="14" cy="17" r="2" fill="#fff" stroke="#111" /><path d="m15 7 8-6M1 16l6 6" stroke="#111" strokeDasharray="2 1.500" strokeWidth="1.500" /></g>),
  lock: (<g><path d="M7 11V7q0-5 5-5t5 5v4" fill="none" stroke="#888" strokeWidth="2.200" /><rect x="3" y="11" width="18" height="12" rx="1" fill="#666" /></g>),
  crs: (<g fill="none" stroke="#666" strokeWidth="1.200"><circle cx="12" cy="10" r="9" fill="#ddd" /><ellipse cx="12" cy="10" rx="4" ry="9" /><path d="M1 10h22M4 5h16M4 15h16M12 1v19M9 20h6l-3 4z" /></g>),
  bubble: <path d="M12 2C5 2 1 6 1 11s4 9 11 9l5-.5L22 23l-1-6q2.500-2.500 2.500-6C23.500 6 19 2 12 2z" fill="#636363" />,
  mag: (<g fill="none" stroke="#858585"><circle cx="10" cy="9" r="7" strokeWidth="1.800" /><path d="m15 14 7 8" strokeWidth="2.600" /></g>),
};
const Icon = ({ n, s = 24 }) => (
  <svg width={s} height={s} viewBox="0 0 24 24">{ICONS[n]}</svg>
);
const Tri = ({ s = 9 }) => (
  <svg width={s} height={s * 0.6} viewBox="0 0 10 6"><path d="M0 0h10L5 6z" fill="#4d4d4d" /></svg>
);

/* ---------- window shell ---------- */
const Screen = styled.div`
  width: 1920px; height: 1080px; position: relative; overflow: hidden;
  display: grid; grid-template-rows: 28px 26px 39px 39px 856px 32px 60px;
  background: #efefef; color: #000; font: 15px/20px ${UI};
`;
const TitleBar = styled.header`
  display: flex; align-items: center; background: #f3f3f3; color: #8b8b8b; padding-left: 2px;
  > ${FitBox} { padding-bottom: 1px; }
`;
const WinButtons = styled.div`
  margin-left: auto; display: flex; gap: 46px; margin-right: 25px;
`;
const MenuBar = styled.nav`
  display: flex; align-items: center; gap: 15px; padding-left: 11px;
  color: #9a9a9a; border-bottom: 1px solid #d4d4d4; background: #f0f0f0;
  u { text-underline-offset: 2px; text-decoration-thickness: 1px; }
`;
const ToolBar = styled.div`
  display: flex; align-items: center; background: linear-gradient(#fbfbfb, #eeeeee);
  border-bottom: ${(p) => (p.$last ? 2 : 1)}px solid #b6b6b6;
`;
const dots = css`
  background:
    conic-gradient(from 90deg at 1px 1px, transparent 75%, #bdbdbd 0) 0 0 / 3px 3px;
`;
const Handle = styled.i`
  flex: none; width: ${(p) => (p.$first ? 14 : 18)}px; height: 18px;
  padding-left: ${(p) => (p.$first ? 6 : 10)}px;
  &::after { content: ""; display: block; width: 4px; height: 18px; ${dots} }
`;
const Slot = styled.span`
  flex: none; width: 33px; height: 31px; display: flex; align-items: center; padding-left: 5px;
  ${(p) => p.$off && css`filter: grayscale(.6); opacity: 0.32;`}
  ${(p) => p.$on && css`
    background: #dcdcdc; box-shadow: inset 0 0 0 1px #aeaeae; border-radius: 3px;
  `}
`;
const Drop = styled.span`
  flex: none; width: 15px; height: 31px; display: flex; align-items: center; justify-content: center; padding-top: 1px;
  ${(p) => p.$on && css`
    background: #dcdcdc; box-shadow: inset 0 0 0 1px #aeaeae; border-radius: 3px;
  `}
`;
const Sep = styled.i`
  flex: none; width: 8px; height: 19px; border-right: 1px solid #cfcfcf; margin-right: 3px; margin-left: -3px;
`;

const TOOLS1 = "|newdoc open save layout manager style | hand pan zoomin zoomout zoomfull zoomsel zoomlayer -zoom11 zoomlast -zoomnext newmap mesh bookmark bookmarks clock refresh | select v selform v deselect v selloc v | info abacus gear sigma table v measure v maptip action v";
const TOOLS2 = "|addlayer geopkg shape spatial memory meshlayer gpx | edits +pencil -savegrey +digitize +v +addpoly vertex v -multi -del -cut -copy -paste -undo -redo | tag diagram / tagpin tagred / -tagpin2 -tageye -tagmove -tagrot -tagedit | metasearch | python | help |";
function Tools({ spec, last }) {
  const items = spec.slice(1).split(" ");
  return (
    <ToolBar $last={last}>
      <Handle $first />
      {items.map((raw, i) => {
        if (raw === "|") return <Handle key={i} />;
        if (raw === "/") return <Sep key={i} />;
        const on = raw[0] === "+";
        const off = raw[0] === "-";
        const n = on || off ? raw.slice(1) : raw;
        if (n === "v") return <Drop key={i} $on={on}><Tri /></Drop>;
        return <Slot key={i} $on={on} $off={off}><Icon n={n} /></Slot>;
      })}
    </ToolBar>
  );
}

/* ---------- docks ---------- */
const Work = styled.main`display: grid; grid-template-columns: 294px 7px 1619px;`;
const Docks = styled.aside`display: grid; grid-template-rows: 50px 376px 8px 49px 373px;`;
const DockHead = styled.div`margin-top: ${(p) => p.$t}px;`;
const DockTitle = styled.div`
  display: flex; align-items: center; height: 20px; padding: 0 2px 0 5px;
`;
const DockBtns = styled.div`margin-left: auto; display: flex; gap: 3px; padding-bottom: 2px;`;
const DockTools = styled.div`
  display: flex; align-items: center; height: 26px; padding-left: 8px; gap: 9px; margin-top: 1px;
`;
const ToolDrop = styled.span`margin: 0 0 0 -2px;`;
const TreeBox = styled.div`
  border: 1px solid #b4b4b4; background: #fff; display: flex; overflow: hidden;
  border-left-color: #c4c4c4;
`;
const Rows = styled.div`flex: 1; overflow: hidden;`;
const Row = styled.div`
  height: 22px; display: flex; align-items: center; padding-left: 6px;
  ${(p) => p.$sel && css`
    background: #efefef; padding-left: 28px; font-weight: 700; font-size: 14.5px;
    ${FitBox} { padding-top: 2px; }
    ${FitInner} { text-decoration: underline; text-underline-offset: 2px; }
  `}
`;
const Twist = styled.span`
  width: 6px; height: 10px; margin-right: 8px; flex: none; margin-top: -1px;
  background: ${(p) => (p.$show ? "#555" : "transparent")};
  clip-path: polygon(0 0, 100% 50%, 0 100%);
`;
const Scroll = styled.div`
  width: 18px; border-left: 1px solid #b8b8b8; background: linear-gradient(90deg, #f0f0f0, #fff);
  display: flex; flex-direction: column; justify-content: space-between; flex: none;
`;
const ScrollBtn = styled.div`
  height: 17px; background: #fbfbfb; display: grid; place-items: center;
  border-${(p) => (p.$up ? "bottom" : "top")}: 1px solid #b8b8b8;
  svg { transform: ${(p) => (p.$up ? "rotate(180deg)" : "none")}; }
`;
const Thumb = styled.div`height: 19px; background: #e6e6e6; border-top: 1px solid #b8b8b8; margin-top: auto;`;
const SplitDots = styled.i`
  display: block; ${(p) => (p.$v ? "width:1px;height:16px;align-self:start;margin:421px 0 0 4px;" : "height:1px;width:17px;margin:3px 0 0 140px;")}
  ${dots}
`;
const Check = styled.span`
  flex: none; width: 17px; height: 17px; border: 1px solid #b5b5b5; background: #fff; display: grid; place-items: center;
  margin: 0 ${(p) => p.$mr || 0}px 0 ${(p) => p.$ml || 0}px;
`;
const Tick = () => (
  <svg width="13" height="13" viewBox="0 0 13 13"><path d="m2.500 6.500 2.800 4.500L10.500 1.500" fill="none" stroke="#000" strokeWidth="2.100" /></svg>
);
const HeadButtons = () => (
  <DockBtns>
    <svg width="11" height="11" viewBox="0 0 11 11"><rect x=".5" y=".5" width="10" height="10" rx="2" fill="#f5f5f5" stroke="#777" /><path d="M4.500 4.500V2.500h4v4h-2M2.500 4.500h4v4h-4z" fill="none" stroke="#666" /></svg>
    <svg width="11" height="11" viewBox="0 0 11 11"><rect x=".5" y=".5" width="10" height="10" rx="2" fill="#ddd" stroke="#777" /><path d="m3 3 5 5M8 3 3 8" stroke="#444" strokeWidth="1.800" /></svg>
  </DockBtns>
);
const SOURCES = [
  ["star", "Favorites", 58], ["spbook", "Spatial Bookmarks", 123, 1], ["home", "Home", 41, 1],
  ["folder", "C:\\ (Windows)", 93, 1], ["folder", "D:\\ (New Volume)", 118, 1], ["folder", "E:\\ (New Volume)", 115, 1],
  ["geopkgs", "GeoPackage", 81], ["feather", "SpatiaLite", 66], ["postgres", "PostgreSQL", 75],
  ["hana", "SAP HANA", 72], ["mssql", "MS SQL Server", 96], ["oracle", "Oracle", 43],
  ["globe", "WMS/WMTS", 84], ["vtiles", "Vector Tiles", 76], ["xyz", "XYZ Tiles", 60, 1],
  ["wcs", "WCS", 31], ["wfs", "WFS / OGC API - Features", 168],
];

/* ---------- canvas ---------- */
const Canvas = styled.section`
  background: #fff; border: 1px solid #b9b9b9; overflow: hidden;
`;

/* ---------- dialog ---------- */
const Dialog = styled.section`
  position: absolute; left: 708px; top: 399px; width: 505px; height: 214px;
  border: 1px solid #a09d9c; border-radius: 10px; background: #f0f0f0; overflow: hidden;
  display: flex; flex-direction: column;
  font: 13px/18px ${DLG};
`;
const DialogShadow = styled.div`
  position: absolute; left: 708px; top: 399px; width: 505px; height: 214px; border-radius: 10px;
  box-shadow: 0 32px 58px rgba(0, 0, 0, 0.3), 0 2px 24px rgba(0, 0, 0, 0.2);
`;
const DialogTitle = styled.div`
  height: 37px; background: #faf1ec; display: flex; align-items: center; padding: 0 0 2px 9px; font: 15px/20px ${UI};
`;
const DialogBtns = styled.div`margin-left: auto; display: flex; gap: 46px; margin-right: 24px;`;
const Form = styled.div`
  padding: 22px 0 0 22px; display: grid; gap: 7px;
  ${FitBox} { padding-top: 2px; }
`;
const FormRow = styled.label`display: flex; align-items: center; height: 26px;`;
const Field = styled.div`
  width: 375px; height: 26px; border: 1px solid ${(p) => (p.$focus ? "#3daee9" : "#a8a8a8")};
  border-radius: 2px; background: #fff; display: flex; align-items: center; padding: 0 9px 0 2px;
  margin-left: ${(p) => p.$ml}px;
  svg { margin-left: auto; }
`;
const Caret = styled.i`width: 1px; height: 16px; background: #000;`;
const Buttons = styled.div`display: flex; justify-content: flex-end; gap: 7px; margin: auto 11px 10px 0;`;
const Button = styled.button`
  width: 80px; height: 26px; padding: 2px 0 0; display: grid; place-items: center; color: #000;
  font: 13px/18px ${DLG}; border-radius: 2px;
  border: 1px solid ${(p) => (p.$def ? "#3daee9" : "#ababab")};
  background: ${(p) => (p.$def ? "linear-gradient(#fdfdfd,#e2e8ee)" : "linear-gradient(#ffffff,#eeeeee)")};
`;
const Clear = () => (
  <svg width="17" height="14" viewBox="0 0 17 14"><path d="M0 7 4 0h13v14H4z" fill="#949494" /><path d="m6.500 4 6 6M12.500 4l-6 6" stroke="#fff" strokeWidth="1.600" /></svg>
);

/* ---------- status bar ---------- */
const Status = styled.footer`
  display: flex; align-items: center; font: 13px/18px ${DLG}; padding: 0 7px 0 4px;
  ${FitBox} { padding-top: 2px; }
  > ${FitBox} { padding-top: 3px; }
`;
const Input = styled.div`
  flex: none; width: ${(p) => p.$w}px; height: ${(p) => p.$h || 24}px; margin-left: ${(p) => p.$ml || 0}px;
  border: 1px solid #ababab; border-radius: 2px; background: #fff; display: flex; align-items: center;
  padding-left: ${(p) => p.$pl}px; color: ${(p) => p.$c || "#000"};
`;
const Spin = styled.div`
  margin-left: auto; width: 17px; height: 100%; border-left: 1px solid #b5b5b5; background: linear-gradient(#fff, #eee);
  display: flex; flex-direction: column; align-items: center; justify-content: center; gap: 4px;
  svg:first-child { transform: rotate(180deg); }
`;
const ComboArrow = styled.div`
  margin-left: auto; width: 26px; height: 100%; background: linear-gradient(#fff, #ececec); display: grid; place-items: center;
`;
const Gap = styled.i`flex: none; width: ${(p) => p.$w}px;`;

/* ---------- taskbar ---------- */
const Taskbar = styled.footer`
  background: #202020; border-top: 1px solid #424242; color: #fff; display: flex; align-items: center;
  font: 15.500px/20px ${UI};
`;
const TwoLines = styled.div`
  display: grid; justify-items: ${(p) => p.$j || "start"}; margin-left: ${(p) => p.$ml}px; flex: none; padding-bottom: 2px;
`;
const Dim = styled.div`color: #bdbdbd;`;
const Sun = styled.i`
  width: 26px; height: 26px; border-radius: 50%; margin-left: 27px; flex: none;
  background: linear-gradient(140deg, #f2c230, #f07c16 65%, #ee5f0c);
`;
const Search = styled.div`
  flex: none; width: 275px; height: 40px; border-radius: 20px; background: #383838; margin-left: 17px;
  box-shadow: inset 0 0 0 1px #424242; display: flex; align-items: center; padding: 0 8px 0 15px; font-size: 17.500px; color: #d4d4d4;
  > svg:last-child { margin-left: auto; }
  ${FitBox} { padding-bottom: 1px; }
`;
const App_ = styled.div`
  flex: none; width: 50px; height: 50px; margin-left: 5px; border-radius: 5px; display: flex; flex-direction: column;
  align-items: center; padding-top: 9px;
  ${(p) => p.$active && css`background: #2d2d2d; box-shadow: inset 0 0 0 1px #383838;`}
  &::after {
    content: ""; width: ${(p) => (p.$active ? 20 : 8)}px; height: 4px; border-radius: 2px; margin-top: 5px;
    background: ${(p) => (p.$active ? "#4cc2ff" : p.$run ? "#9a9a9a" : "transparent")};
  }
`;
const Badge = styled.span`
  width: 20px; height: 20px; border-radius: 50%; background: #4cc2ff; color: #111; display: grid; place-items: center;
  font-size: 13px; margin-left: 10px; flex: none;
`;

const A = {
  view: (<g><rect x="0" y="8" width="23" height="20" fill="#6b6b6b" /><rect x="7.500" y="0" width="22.500" height="20" fill="#f2f2f2" /><path d="M7.500 8H23v12H7.500z" fill="#b9b9b9" /></g>),
  chat: (<g><defs><linearGradient id="ch" x1="0" y1="0" x2="0.300" y2="1"><stop offset="0" stopColor="#a378c4" /><stop offset=".5" stopColor="#5b5fc7" /><stop offset="1" stopColor="#5257d0" /></linearGradient></defs><path d="M14.500 0a14 14 0 1 1-6 26.500L.5 28 2 21A14 14 0 0 1 14.500 0z" fill="url(#ch)" /><rect x="6.500" y="8" width="12" height="12" rx="2" fill="#fff" /><path d="m19.500 12.500 4-2.500v8l-4-2.500z" fill="#fff" /></g>),
  files: (<g><path d="M0 4q0-2 2-2h8l3 4h-2L0 12z" fill="#dd9b08" /><path d="M0 8h10l3-3h15q2 0 2 2v21H0z" fill="#fdc935" /><path d="M0 20h30v8H0z" fill="#fbbc1c" fillOpacity=".6" /><path d="M5 28v-5q0-2.500 2.500-2.500h15q2.500 0 2.500 2.500v5z" fill="#1070c8" /><path d="M8 24h14" stroke="#0b4a90" strokeWidth="1.500" /></g>),
  edge: (<g><defs><linearGradient id="eg" x1="0" x2="1" y1=".3" y2=".5"><stop offset="0" stopColor="#2aa6e0" /><stop offset=".6" stopColor="#36c6c0" /><stop offset="1" stopColor="#64df58" /></linearGradient></defs><circle cx="15" cy="15" r="15" fill="#0c68bd" /><path d="M1 11A15 15 0 0 1 30 15q0 6-6 6-7 0-6-3 2-2 1-5-2-4-8-4-7 0-10 2z" fill="url(#eg)" /><path d="M0 14Q3 8 10 9q6 0 8 4-5-2-6 3 0 7 8 9 5 0 8-2-4 7-13 7Q1 29 0 14z" fill="#1280d4" /><path d="M12 14q-6 3-4 9 3 6 10 6.500 7-1 10-6.500-4 2.500-9 1-6-2-7-6z" fill="#114f97" /><path d="M13 13q4-3 6 0 1 3-1 5 0 3 6 3 4 0 6-3-.5 3-2 5-4 2.500-9 1-7-3-6-11z" fill="#202020" /></g>),
  store: (<g><path d="M8 6V1.500h14V6" fill="none" stroke="#2fa9e6" strokeWidth="2" /><path d="M.5 5.500h29v20q0 4-4 4h-21q-4 0-4-4z" fill="#f1f1f1" /><path d="M9.500 12h5v5h-5z" fill="#f1511b" /><path d="M15.700 12h5v5h-5z" fill="#80bb0a" /><path d="M9.500 18h5v5h-5z" fill="#06a5ee" /><path d="M15.700 18h5v5h-5z" fill="#fbb90a" /></g>),
  help: (<g><circle cx="15" cy="15" r="14" fill="#0a98dc" stroke="#fff" strokeWidth="1.800" /><path d="M9.500 12q0-6 5.500-6 6 0 6 4.800 0 2.700-3 4.700-2 1.400-2 4" fill="none" stroke="#fff" strokeWidth="3.600" /><circle cx="15.700" cy="23.300" r="2.200" fill="#fff" /></g>),
  diamond: (<g><defs><linearGradient id="dm"><stop offset="0" stopColor="#ff3fae" /><stop offset=".45" stopColor="#f5101c" /><stop offset=".6" stopColor="#fb1800" /><stop offset="1" stopColor="#ffa800" /></linearGradient></defs><path d="M15 .5 30 15 15 29.500 0 15z" fill="url(#dm)" /></g>),
  chrome: (<g><circle cx="15" cy="15" r="15" fill="#fbc116" /><path d="M15 15 2 7.500A15 15 0 0 1 28 7.500H15z" fill="#e33b2e" /><path d="M15 15 2 7.500A15 15 0 0 0 15 30l6.500-11.200z" fill="#21984b" /><circle cx="15" cy="15" r="7" fill="#fff" /><circle cx="15" cy="15" r="5.500" fill="#3e82f1" /><circle cx="26" cy="5" r="10" fill="#4a3238" /><path d="M19 2q4-4 8-3l-3 4zM22 8l5-3 3 5-6 2z" fill="#957580" /><path d="m27 0 6 4-4 1z" fill="#b8969e" /><path d="M31 13q6-4 4.500-10" stroke="#a0529c" fill="none" strokeWidth="1.500" /></g>),
  qgis: <g transform="translate(1 1) scale(1.170)"><QLogo /></g>,
};
const TaskApp = ({ n, run, active }) => (
  <App_ $run={run} $active={active}><svg width="30" height="31" viewBox="0 0 30 30" overflow="visible">{A[n]}</svg></App_>
);

const MENU = [
  ["Pro", "j", "ect", 46], ["", "E", "dit", 26], ["", "V", "iew", 32], ["", "L", "ayer", 35], ["", "S", "ettings", 53],
  ["", "P", "lugins", 47], ["Vect", "o", "r", 42], ["", "R", "aster", 41], ["", "D", "atabase", 62], ["", "W", "eb", 31],
  ["", "M", "esh", 35], ["Pro", "c", "essing", 70], ["", "H", "elp", 32],
];

export default function App() {
  return (
    <>
      <Global />
      <Screen>
        <TitleBar>
          <Icon n="logo" s={20} />
          <Fit w={166} ml={6}>*Untitled Project — QGIS</Fit>
          <WinButtons>
            <svg width="12" height="13" viewBox="0 0 12 13"><path d="M0 6.500h12" stroke="#8a8a8a" /></svg>
            <svg width="13" height="13" viewBox="0 0 13 13"><path d="M.5 3.500q0-1 1-1h7q1 0 1 1v8q0 1-1 1h-7q-1 0-1-1zM3 .5h7.500q2 0 2 2V10" fill="none" stroke="#8a8a8a" /></svg>
            <svg width="13" height="13" viewBox="0 0 13 13"><path d="m.5.5 12 12M12.500.5l-12 12" stroke="#8a8a8a" /></svg>
          </WinButtons>
        </TitleBar>
        <MenuBar>
          {MENU.map(([a, u, b, w]) => <Fit key={a + u + b} w={w}>{a}<u>{u}</u>{b}</Fit>)}
        </MenuBar>
        <Tools spec={TOOLS1} />
        <Tools spec={TOOLS2} last />
        <Work>
          <Docks>
            <DockHead $t={0}>
              <DockTitle><Fit w={52}>Browser</Fit><HeadButtons /></DockTitle>
              <DockTools>
                {["newlayer", "refresh", "filter", "collapse", "infosmall"].map((n) => <Icon key={n} n={n} s={16} />)}
              </DockTools>
            </DockHead>
            <TreeBox>
              <Rows>
                {SOURCES.map(([ic, label, w, tw]) => (
                  <Row key={label}><Twist $show={tw} /><Icon n={ic} s={20} /><Fit w={w} ml={6}>{label}</Fit></Row>
                ))}
              </Rows>
              <Scroll>
                <ScrollBtn $up><Tri /></ScrollBtn>
                <Thumb />
                <ScrollBtn><Tri /></ScrollBtn>
              </Scroll>
            </TreeBox>
            <SplitDots />
            <DockHead $t={-1}>
              <DockTitle><Fit w={40}>Layers</Fit><HeadButtons /></DockTitle>
              <DockTools>
                {["brush", "group", "eye", "filterdd", "eps"].map((n) => <Icon key={n} n={n} s={16} />)}
                <ToolDrop><Tri /></ToolDrop>
                {["expand", "collapse", "removelayer"].map((n) => <Icon key={n + "l"} n={n} s={16} />)}
              </DockTools>
            </DockHead>
            <TreeBox>
              <Rows>
                <Row $sel><Check $mr={6}><Tick /></Check><Icon n="laypoly" s={18} /><Fit w={57} ml={5}>polygon</Fit></Row>
              </Rows>
            </TreeBox>
          </Docks>
          <SplitDots $v />
          <Canvas>
            <svg width="1617" height="854" viewBox="302 133 1617 854">
              <path d="M1154.500 364 1380 444 1428 624.500 1244 751 950 810.500 894 578z" fill="#ffe0e0" stroke="#ff3838" strokeWidth="1" />
            </svg>
          </Canvas>
        </Work>
        <Status>
          <Input $w={232} $h={26} $pl={9} $c="#7d7d7d"><Icon n="mag" s={17} /><Fit w={130} ml={7}>Type to locate (Ctrl+K)</Fit></Input>
          <Fit w={61} ml={807}>Coordinate</Fit>
          <Input $w={104} $h={26} $ml={4} $pl={9}><Fit w={82}>0.164°, -0.93°</Fit></Input>
          <Gap $w={4} /><Icon n="gps" s={19} />
          <Fit w={30} ml={14}>Scale</Fit>
          <Input $w={75} $ml={4} $pl={1}><Fit w={45}>.223250</Fit><ComboArrow><Tri s={10} /></ComboArrow></Input>
          <Gap $w={10} /><Icon n="lock" s={20} />
          <Fit w={52} ml={7}>Magnifier</Fit>
          <Input $w={93} $ml={4} $pl={4}><Fit w={32}>100%</Fit><Spin><Tri /><Tri /></Spin></Input>
          <Fit w={47} ml={9}>Rotation</Fit>
          <Input $w={89} $ml={9} $pl={4}><Fit w={28}>0.0 °</Fit><Spin><Tri /><Tri /></Spin></Input>
          <Check $ml={6} $mr={6}><Tick /></Check>
          <Fit w={41}>Render</Fit>
          <Gap $w={15} /><Icon n="crs" s={20} />
          <Fit w={63} ml={2}>EPSG:4326</Fit>
          <Gap $w={24} /><Icon n="bubble" s={21} />
        </Status>
        <Taskbar>
          <Sun />
          <TwoLines $ml={12}><Fit w={31}>36°C</Fit><Dim><Fit w={42}>Sunny</Fit></Dim></TwoLines>
          <Gap $w={450} />
          <svg width="29" height="29" viewBox="0 0 29 29">
            <defs><linearGradient id="win" x1="0" y1="0" x2="1" y2="1"><stop offset="0" stopColor="#8ae0fd" /><stop offset=".5" stopColor="#3cc0fb" /><stop offset="1" stopColor="#0d92f8" /></linearGradient></defs>
            <path d="M1 0h13v14H0V1zM15 0h13l1 1v13H15zM0 15h14v14H1l-1-1zM15 15h14v13l-1 1H15z" fill="url(#win)" />
          </svg>
          <Search>
            <svg width="19" height="19" viewBox="0 0 19 19"><circle cx="8" cy="8" r="6.700" fill="none" stroke="#e6e6e6" strokeWidth="1.900" /><path d="m12.800 12.800 5 5" stroke="#e6e6e6" strokeWidth="2.200" /></svg>
            <Fit w={51} ml={12}>Search</Fit>
            <svg width="56" height="34" viewBox="0 0 56 34">
              <defs><linearGradient id="mn" x1="0" y1="0" x2=".2" y2="1"><stop offset="0" stopColor="#c8b9c4" /><stop offset="1" stopColor="#86747f" /></linearGradient></defs>
              <path d="M7 9Q9 3 17 2q11-2 20 3 7 4 11 13 3 2 7 2l-1 3q-4 6-9 5l-1-5q-4-4-9-3-6 3-13 2l-6 4q-5 1-4-1l5-5q-3-3-3-6-4 1-7-2z" fill="url(#mn)" />
              <path d="m22 20-8 6q4 0 9-4z" fill="#6f6069" /><circle cx="14.500" cy="7" r="1.300" fill="#33292f" />
              <path d="M2 33V22l1.500-4L5 24l2-11 1.500 8v12z" fill="#a0be2a" /><path d="M4 33l1-9 2 9z" fill="#66872a" />
            </svg>
          </Search>
          <TaskApp n="view" />
          <TaskApp n="chat" />
          <TaskApp n="files" run />
          <TaskApp n="edge" run />
          <TaskApp n="store" />
          <TaskApp n="help" />
          <TaskApp n="diamond" />
          <TaskApp n="chrome" run />
          <TaskApp n="qgis" active />
          <Gap $w={143} />
          <svg width="14" height="8" viewBox="0 0 14 8"><path d="m1 7 6-6 6 6" fill="none" stroke="#fff" strokeWidth="1.700" /></svg>
          <Gap $w={23} />
          <svg width="21" height="15" viewBox="0 0 21 15"><path d="M3 13Q0 11 1 8t4-3q2-5 7-4 4 1 5 5l-9 7z" fill="#a5a5a5" /><path d="M4 14q-4-1-3-4 2-3 5-2 4-4 9-2 4 0 5 4t-3 4z" fill="#f0f0f0" /></svg>
          <Gap $w={19} />
          <svg width="21" height="21" viewBox="0 0 21 21"><path d="M1 8Q4 1 11 1.500q5 .5 8 5M19 1v5.500h-5M2 19v-5h5M2 15q3 5 8 4.500" fill="none" stroke="#fff" strokeWidth="1.400" /><circle cx="15" cy="15.500" r="5.200" fill="#ff9a0c" /></svg>
          <TwoLines $ml={23} $j="center"><Fit w={29}>ENG</Fit><Fit w={15}>IN</Fit></TwoLines>
          <Gap $w={22} />
          <svg width="20" height="16" viewBox="0 0 20 16"><g fill="none" stroke="#fff" strokeWidth="1.500"><path d="M.8 5.500q9.200-9 18.400 0M3.700 8.500q6.300-6 12.600 0M6.700 11.500q3.300-3 6.600 0" /></g><circle cx="10" cy="13.700" r="1.700" fill="#fff" /></svg>
          <Gap $w={10} />
          <svg width="20" height="18" viewBox="0 0 20 18"><path d="M.8 6.500h3.500L8.500 2v14l-4.200-4.500H.8z" fill="none" stroke="#fff" strokeWidth="1.400" /><path d="M11 6q2 3 0 6" fill="none" stroke="#fff" strokeWidth="1.400" /><path d="M13.500 4q3.500 5 0 10M16 2q5 7 0 14" fill="none" stroke="#6a6a6a" strokeWidth="1.400" /></svg>
          <Gap $w={10} />
          <svg width="20" height="14" viewBox="0 0 20 14"><rect x=".8" y=".8" width="16" height="12" rx="3" fill="none" stroke="#fff" strokeWidth="1.500" /><rect x="3" y="3" width="7" height="7.600" rx="1" fill="#fff" /><path d="M18 5q2 0 2 2t-2 2z" fill="#fff" /></svg>
          <TwoLines $ml={20} $j="end"><Fit w={34}>14:47</Fit><Fit w={77}>21-04-2023</Fit></TwoLines>
          <Badge>1</Badge>
        </Taskbar>
        <DialogShadow />
        <Dialog>
          <DialogTitle>
            <Icon n="logo" s={20} />
            <Fit w={187} ml={5}>polygon - Feature Attributes</Fit>
            <DialogBtns>
              <svg width="12" height="12" viewBox="0 0 12 12"><path d="M0 5.500h12" stroke="#c4bdb9" /></svg>
              <svg width="12" height="12" viewBox="0 0 12 12"><rect x=".7" y=".7" width="10.600" height="10.600" rx="1" fill="none" stroke="#111" strokeWidth="1.300" /></svg>
              <svg width="13" height="12" viewBox="0 0 13 12"><path d="m.5 0 12 12M12.500 0l-12 12" stroke="#111" strokeWidth="1.300" /></svg>
            </DialogBtns>
          </DialogTitle>
          <Form>
            <FormRow><Fit w={10}>id</Fit><Field $ml={61}><Fit w={7}>1</Fit><Clear /></Field></FormRow>
            <FormRow><Fit w={64}>Shape_info</Fit><Field $ml={7} $focus><Fit w={44}>polygon</Fit><Caret /><Clear /></Field></FormRow>
          </Form>
          <Buttons>
            <Button $def><Fit w={17}>OK</Fit></Button>
            <Button><Fit w={38}>Cancel</Fit></Button>
          </Buttons>
        </Dialog>
      </Screen>
    </>
  );
}
